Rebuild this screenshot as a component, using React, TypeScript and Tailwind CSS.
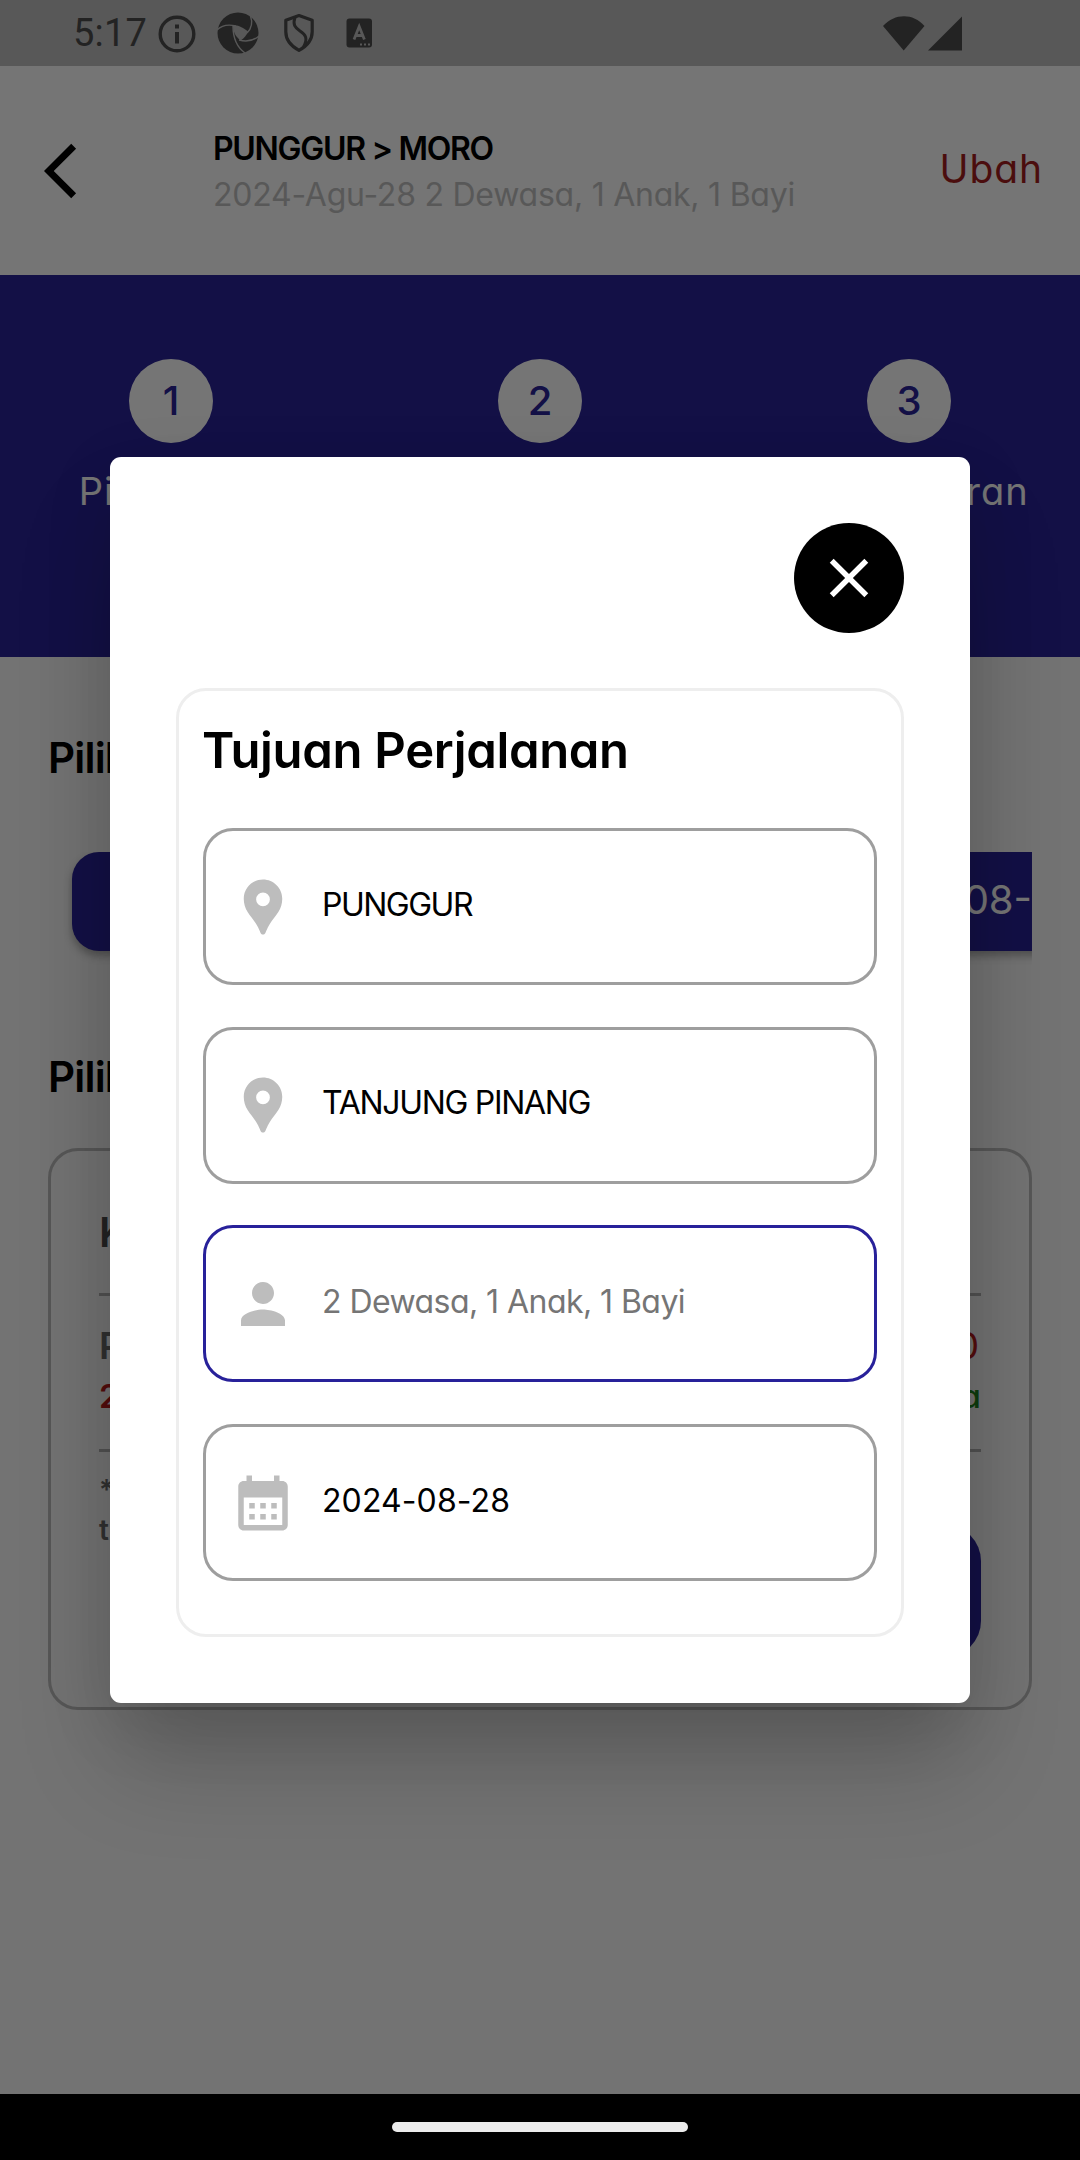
import type { ReactNode } from "react";

const iconPaths = {
  place:
    "M12 2C8.13 2 5 5.13 5 9c0 1.74.5 3.37 1.41 4.84.95 1.54 2.2 2.86 3.16 4.4.47.75.81 1.45 1.17 2.26.26.55.47 1.5 1.26 1.5s1-.95 1.25-1.5c.37-.81.7-1.51 1.17-2.26.96-1.53 2.21-2.85 3.16-4.4C18.5 12.37 19 10.74 19 9c0-3.87-3.13-7-7-7zm0 9.75a2.5 2.5 0 0 1 0-5 2.5 2.5 0 0 1 0 5z",
  person:
    "M12 12c2.21 0 4-1.79 4-4s-1.79-4-4-4-4 1.79-4 4 1.79 4 4 4zm0 2c-2.67 0-8 1.34-8 4v2h16v-2c0-2.66-5.33-4-8-4z",
  calendar:
    "M19 4h-1V2h-2v2H8V2H6v2H5c-1.11 0-1.99.9-1.99 2L3 20c0 1.1.89 2 2 2h14c1.1 0 2-.9 2-2V6c0-1.1-.9-2-2-2zm0 16H5V10h14v10zM9 14H7v-2h2v2zm4 0h-2v-2h2v2zm4 0h-2v-2h2v2zm-8 4H7v-2h2v2zm4 0h-2v-2h2v2zm4 0h-2v-2h2v2z",
  back: "M11.67 3.87L9.9 2.1 0 12l9.9 9.9 1.77-1.77L3.54 12z",
  close:
    "M19 6.41L17.59 5 12 10.59 6.41 5 5 6.41 10.59 12 5 17.59 6.41 19 12 13.41 17.59 19 19 17.59 13.41 12z",
};

function Icon({ name, className }: { name: keyof typeof iconPaths; className: string }) {
  return (
    <svg viewBox="0 0 24 24" fill="currentColor" className={className}>
      <path d={iconPaths[name]} />
    </svg>
  );
}

function StatusBar() {
  return (
    <div className="flex h-[66px] shrink-0 items-center justify-between bg-[#bfbfbf] pr-[118px] pl-[73px] text-[#4c4c4c]">
      <div className="flex items-center">
        <span className="w-[85px] font-[Roboto] text-[38px] leading-[66px] tracking-[0.2px]">5:17</span>
        <svg width="38" height="38" viewBox="0 0 38 38" className="mt-[1px]">
          <circle cx="19" cy="19" r="16.8" fill="none" stroke="currentColor" strokeWidth="3.4" />
          <path d="M17 9.5h4v4h-4zM17 17h4v11.5h-4z" fill="currentColor" />
        </svg>
        <svg width="44" height="44" viewBox="0 0 44 44" className="ml-[20px]">
          <circle cx="22" cy="22" r="20.5" fill="currentColor" />
          <path d="M17 15C20 13.500 25 15 32 20.500C31 24 28 27.500 24.500 29.500C20 26 17 21 17 15z" fill="#bfbfbf" />
          <g fill="none" stroke="#bfbfbf" strokeWidth="1.400">
            <path d="M1 19C6 14 12 13 20 15" />
            <path d="M34.500 5C37 12 35 18 31 22" />
            <path d="M43 25C36 31 30 31 23 29" />
            <path d="M29 42C22 37 17 30 17 15" />
          </g>
        </svg>
        <svg width="32" height="40" viewBox="0 0 32 40" className="ml-[23px]">
          <g fill="none" stroke="currentColor" strokeWidth="3.200" strokeLinejoin="round">
            <path d="M16 2.600l13.200 4.600v11.500c0 8-5.500 14.500-13.200 18.600C8.300 33.200 2.800 26.700 2.800 18.700V7.200z" />
            <path d="M12 4.500c-2.500 7 0 10 5 13.500 6 4 8 7.500 3.500 16" strokeWidth="3" />
          </g>
        </svg>
        <svg width="27" height="30" viewBox="0 0 27 30" className="ml-[31px]">
          <rect x="0.500" y="0.500" width="25.500" height="29" rx="3" fill="currentColor" />
          <path d="M8 21.500L13.200 8.500l5.200 13M9.800 17.500h7" fill="none" stroke="#bfbfbf" strokeWidth="2.800" />
          <path d="M14 25.500h2v2h-2zM18 25.500h2v2h-2zM22 25.500h2v2h-2z" fill="#bfbfbf" />
        </svg>
      </div>
      <svg width="79" height="35" viewBox="0 0 79 35" fill="currentColor">
        <path d="M0 10C12-3 30-3 41.500 10L20.700 34.500z" />
        <path d="M79 0.500V34.500H45z" />
      </svg>
    </div>
  );
}

function Header() {
  return (
    <div className="flex h-[209px] shrink-0 items-center bg-white pr-[37px] pl-[44px]">
      <Icon name="back" className="size-[66px] text-black" />
      <div className="mt-[2px] ml-[103px] flex-1 whitespace-nowrap">
        <p className="text-[32px] leading-[46px] font-semibold tracking-[-1.3px] text-black">
          PUNGGUR &gt; MORO
        </p>
        <p className="text-[32px] leading-[45px] font-normal tracking-[-0.24px] text-[#c1c1c1]">
          2024-Agu-28 2 Dewasa, 1 Anak, 1 Bayi
        </p>
      </div>
      <span className="mb-[4px] text-[39px] leading-[50px] font-normal tracking-[0.9px] text-[#a31e20]">Ubah</span>
    </div>
  );
}

function Step({ number, label }: { number: number; label: string }) {
  return (
    <div className="flex w-[240px] flex-col items-center">
      <div className="flex size-[84px] items-center justify-center rounded-full bg-white text-[40px] font-medium text-[#2a2398]">
        {number}
      </div>
      <p className="mt-[23px] text-[38px] leading-[50px] font-normal tracking-[1px] whitespace-nowrap text-white">
        {label}
      </p>
    </div>
  );
}

function TripCard() {
  return (
    <div className="mt-[46px] flex h-[562px] flex-col rounded-[30px] border-[3px] border-[#bdbdbd] px-[48px] pt-[56px]">
      <p className="text-[41px] leading-[50px] font-semibold text-[#4c4c4c]">KM.</p>
      <div className="mt-[36px] h-[3px] bg-[#b4b4b4]" />
      <div className="mt-[25px] flex items-center justify-between text-[37px] leading-[50px]">
        <span className="font-semibold text-[#6c6c6c]">Punggur</span>
        <span className="mr-[2px] font-normal text-[#b71c1c]">Rp 250.000</span>
      </div>
      <div className="flex items-center justify-between text-[33px] leading-[50px]">
        <span className="font-semibold text-[#b71c1c]">28</span>
        <span className="font-medium text-[#1d861d]">Tersedia</span>
      </div>
      <div className="mt-[28px] h-[3px] bg-[#b4b4b4]" />
      <p className="mt-[18px] text-[28px] leading-[40px] font-semibold text-[#6c6c6c]">
        * Belum
        <br />
        tiket
      </p>
      <div className="mt-[-25px] h-[132px] w-[260px] self-end rounded-[36px] bg-[#2a2398]" />
    </div>
  );
}

function Field({
  icon,
  active = false,
  muted = false,
  children,
}: {
  icon: keyof typeof iconPaths;
  active?: boolean;
  muted?: boolean;
  children: ReactNode;
}) {
  return (
    <div
      className={`flex h-[157px] items-center rounded-[30px] border-[3px] pl-[24px] ${
        active ? "border-[#28219a]" : "border-[#9e9e9e]"
      }`}
    >
      <Icon name={icon} className="size-[66px] text-[#bdbdbd]" />
      <div
        className={`mb-[4px] ml-[26px] text-[32px] leading-[48px] font-normal whitespace-nowrap ${
          muted ? "text-[#757575]" : "text-black"
        }`}
      >
        {children}
      </div>
    </div>
  );
}

function TripDialog() {
  return (
    <div className="mt-[457px] flex h-[1246px] w-[860px] flex-col rounded-[11px] bg-white p-[66px] shadow-[0_66px_100px_-6px_rgba(0,0,0,0.19),0_20px_70px_0px_rgba(0,0,0,0.1)]">
      <button className="flex size-[110px] items-center justify-center self-end rounded-full bg-black">
        <Icon name="close" className="size-[66px] text-white" />
      </button>
      <div className="mt-[55px] flex h-[949px] flex-col rounded-[30px] border-[3px] border-[#eeeeee] px-[24px] pt-[27px]">
        <h1 className="ml-[-1px] text-[49px] leading-[66px] font-semibold tracking-[-0.32px] whitespace-nowrap text-black">
          Tujuan Perjalanan
        </h1>
        <div className="mt-[44px] flex flex-col gap-[41.700px]">
          <Field icon="place">
            <span className="tracking-[-1.500px]">PUNGGUR</span>
          </Field>
          <Field icon="place">
            <span className="tracking-[-1.300px]">TANJUNG PINANG</span>
          </Field>
          <Field icon="person" active muted>
            <span className="tracking-[-0.550px]">2 Dewasa, 1 Anak, 1 Bayi</span>
          </Field>
          <Field icon="calendar">
            <span className="tracking-[0.100px]">2024-08-28</span>
          </Field>
        </div>
      </div>
    </div>
  );
}

export default function App() {
  return (
    <div className="relative flex h-[2160px] w-[1080px] flex-col overflow-hidden bg-[#fafafa] font-[Inter,sans-serif] [font-feature-settings:'cv11']">
      <StatusBar />
      <Header />
      <div className="flex h-[382px] shrink-0 justify-between bg-[#2a2398] px-[51px] pt-[84px]">
        <Step number={1} label="Pilih Tiket" />
        <Step number={2} label="Data Diri" />
        <Step number={3} label="Pembayaran" />
      </div>
      <div className="flex flex-1 flex-col px-[48px] pt-[76px]">
        <h2 className="text-[42px] leading-[50px] font-semibold tracking-[-0.8px] text-black">Pilih</h2>
        <div className="mt-[69px] flex h-[120px] gap-[48px] overflow-hidden pl-[24px]">
          <div className="h-[99px] w-[360px] shrink-0 rounded-[27px] bg-[#2a2398] shadow-[0_5px_8px_rgba(0,0,0,0.3)]" />
          <div className="flex h-[99px] w-[720px] shrink-0 items-center rounded-[27px] bg-[#2a2398] pb-[4px] pl-[366px] text-[40px] font-normal whitespace-nowrap text-white shadow-[0_5px_8px_rgba(0,0,0,0.3)]">
            2024-08-
          </div>
        </div>
        <h2 className="mt-[80px] text-[42px] leading-[50px] font-semibold tracking-[-0.8px] text-black">Pilih</h2>
        <TripCard />
      </div>
      <div className="absolute inset-0 flex items-start justify-center bg-black/54">
        <TripDialog />
      </div>
      <div className="relative flex h-[66px] shrink-0 items-center justify-center bg-black">
        <div className="h-[10px] w-[296px] rounded-full bg-[#ececec]" />
      </div>
    </div>
  );
}
